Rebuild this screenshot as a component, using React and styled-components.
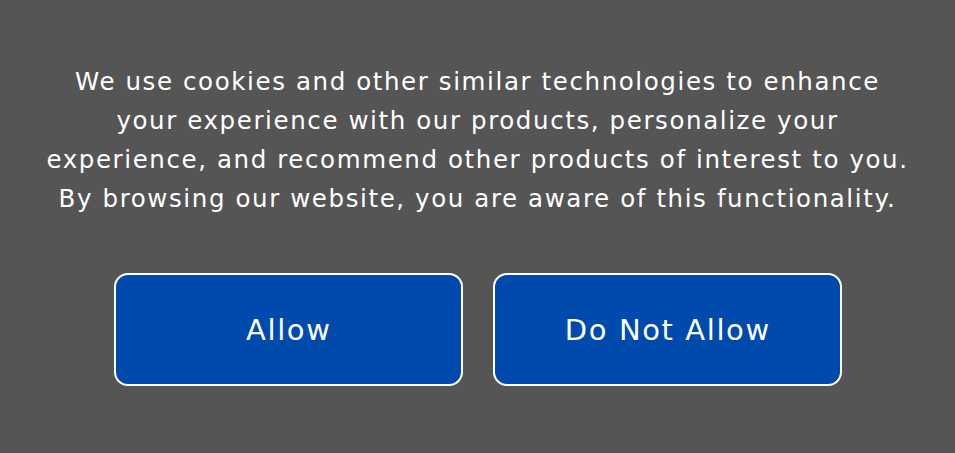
import React from "react";
import styled, { createGlobalStyle } from "styled-components";

const Global = createGlobalStyle`
  html, body { margin: 0; padding: 0; background: #555555; }
  * { box-sizing: border-box; }
`;

const Banner = styled.div`
  width: 955px;
  height: 453px;
  background: #555555;
  display: flex;
  flex-direction: column;
  align-items: center;
  padding-top: 62px;
  font-family: "DejaVu Sans", "Open Sans", sans-serif;
  color: #ffffff;
`;

const Message = styled.p`
  margin: 0;
  font-size: 24.5px;
  line-height: 39px;
  text-align: center;
  letter-spacing: 1.6px;
`;

const Actions = styled.div`
  display: flex;
  gap: 30px;
  margin-top: 55px;
`;

const ActionButton = styled.button`
  width: 349px;
  height: 113px;
  background: #004aad;
  border: 2px solid #ffffff;
  border-radius: 14px;
  color: #ffffff;
  font-family: inherit;
  font-size: 29px;
  letter-spacing: 1.6px;
  padding: 0 0 0 1.6px;
  cursor: pointer;
`;

export default function App() {
  return (
    <>
      <Global />
      <Banner>
        <Message>
          We use cookies and other similar technologies to enhance
          <br />
          your experience with our products, personalize your
          <br />
          experience, and recommend other products of interest to you.
          <br />
          By browsing our website, you are aware of this functionality.
        </Message>
        <Actions>
          <ActionButton>Allow</ActionButton>
          <ActionButton>Do Not Allow</ActionButton>
        </Actions>
      </Banner>
    </>
  );
}
